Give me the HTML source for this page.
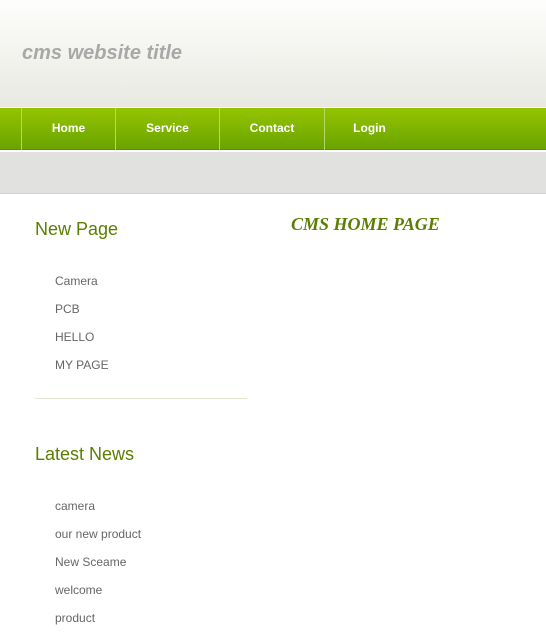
<!DOCTYPE html>
<html><head><style>
*{margin:0;padding:0;box-sizing:border-box}
body{width:546px;height:635px;overflow:hidden;background:#fff;font-family:"Liberation Sans",Arial,sans-serif;position:relative}
.hdr{position:absolute;left:0;top:0;width:546px;height:107px;background:linear-gradient(#fdfdfc,#e9e9e2)}
.title{position:absolute;left:22px;top:42px;font-size:20px;font-weight:bold;font-style:italic;color:#a8a8a8}
.nav{position:absolute;left:0;top:108px;width:546px;height:42px;background:linear-gradient(#95c400,#6aa400);border-bottom:1px solid #5a9000}
.nav div{position:absolute;top:0;height:42px;border-left:1px solid #b4d860;color:#fff;font-weight:bold;font-size:12px;line-height:40px;text-align:center}
.gray{position:absolute;left:0;top:151px;width:546px;height:43px;background:#e1e1df;border-top:1px solid #fff;border-bottom:1px solid #d0d0d0}
h2{position:absolute;left:35px;font-size:18px;font-weight:normal;color:#5a7f00}
.li{position:absolute;left:55px;font-size:12px;color:#666}
.hr{position:absolute;left:35px;top:398px;width:212px;border-top:1px solid #e8e4d4}
.cms{position:absolute;left:291px;top:214px;font-family:"Liberation Serif",serif;font-style:italic;font-weight:bold;font-size:18px;color:#5a7f00}
</style></head><body>
<div class="hdr"></div>
<div class="title">cms website title</div>
<div class="nav">
<div style="left:21px;width:94px">Home</div>
<div style="left:115px;width:104px">Service</div>
<div style="left:219px;width:105px">Contact</div>
<div style="left:324px;width:90px">Login</div>
</div>
<div class="gray"></div>
<h2 style="top:219px">New Page</h2>
<div class="li" style="top:274px">Camera</div>
<div class="li" style="top:302px">PCB</div>
<div class="li" style="top:330px">HELLO</div>
<div class="li" style="top:358px">MY PAGE</div>
<div class="hr"></div>
<h2 style="top:444px">Latest News</h2>
<div class="li" style="top:499px">camera</div>
<div class="li" style="top:527px">our new product</div>
<div class="li" style="top:555px">New Sceame</div>
<div class="li" style="top:583px">welcome</div>
<div class="li" style="top:611px">product</div>
<div class="cms">CMS HOME PAGE</div>
</body></html>
